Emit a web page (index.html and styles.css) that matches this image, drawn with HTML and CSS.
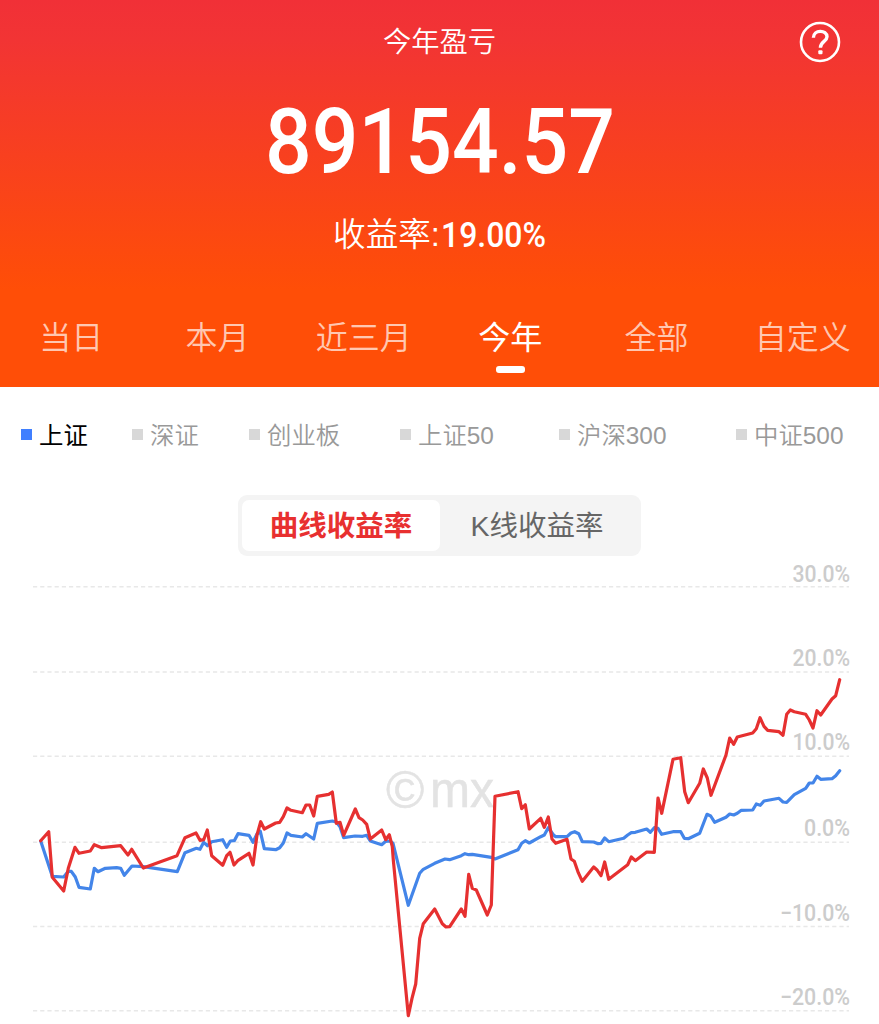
FILE: index.html
```html
<!DOCTYPE html>
<html lang="zh-CN">
<head>
<meta charset="utf-8">
<title>今年盈亏</title>
<link rel="stylesheet" href="styles.css">
</head>
<body>
<header class="summary">
  <div class="title-bar">
    <h1 class="title">今年盈亏</h1>
    <svg class="help" viewBox="0 0 42 42">
      <circle cx="21" cy="21" r="19" fill="none" stroke="#fff" stroke-width="2.6"/>
      <path d="M14.4 16.8C14.4 8.4 28 8.4 28 15.8C28 20.6 21.4 20.4 21.4 26.8" fill="none" stroke="#fff" stroke-width="3.4"/>
      <rect x="19.3" y="29.2" width="4.2" height="4" rx="1" fill="#fff"/>
    </svg>
  </div>
  <svg class="amount" viewBox="0 0 380 110"><text x="15" y="89" textLength="350" lengthAdjust="spacingAndGlyphs">89154.57</text></svg>
  <div class="rate">
    <span class="rate-label">收益率:</span>
    <svg class="rate-value" viewBox="0 0 112 50"><text x="1" y="37.5" textLength="105" lengthAdjust="spacingAndGlyphs">19.00%</text></svg>
  </div>
  <nav class="tabs">
    <span class="tab">当日</span>
    <span class="tab">本月</span>
    <span class="tab">近三月</span>
    <span class="tab tab-active">今年</span>
    <span class="tab">全部</span>
    <span class="tab">自定义</span>
  </nav>
</header>
<main>
  <div class="legend">
    <span class="index index-active"><span class="index-name">上证</span></span>
    <span class="index"><span class="index-name">深证</span></span>
    <span class="index"><span class="index-name">创业板</span></span>
    <span class="index"><span class="index-name">上证50</span></span>
    <span class="index"><span class="index-name">沪深300</span></span>
    <span class="index"><span class="index-name">中证500</span></span>
  </div>
  <div class="switch">
    <span class="option option-active">曲线收益率</span>
    <span class="option">K线收益率</span>
  </div>
  <svg class="chart" viewBox="0 556 879 468">
    <g class="grid">
      <path d="M33 586.7H849M33 672H849M33 756.2H849M33 842.3H849M33 926.5H849M33 1010.7H849"/>
    </g>
    <g class="watermark">
      <text x="386" y="807.5" font-size="52">©</text>
      <text x="430" y="807" textLength="64" lengthAdjust="spacingAndGlyphs" font-size="50">mx</text>
    </g>
    <g class="axis">
      <text x="792.5" y="582" textLength="57.5" lengthAdjust="spacingAndGlyphs">30.0%</text>
      <text x="792.5" y="666" textLength="57.5" lengthAdjust="spacingAndGlyphs">20.0%</text>
      <text x="792.5" y="750" textLength="57.5" lengthAdjust="spacingAndGlyphs">10.0%</text>
      <text x="804" y="836" textLength="46" lengthAdjust="spacingAndGlyphs">0.0%</text>
      <text x="780" y="920.5" textLength="70" lengthAdjust="spacingAndGlyphs">−10.0%</text>
      <text x="780" y="1004.5" textLength="70" lengthAdjust="spacingAndGlyphs">−20.0%</text>
    </g>
    <polyline class="line line-index" points="40.7,841 52.3,876.3 63.7,877 68.3,871.3 71.3,871.3 75.3,877 79,887.3 90.3,889 94.3,868.3 98,871.7 105.3,868.3 116.7,867.7 120.7,868.3 124.3,875.3 132,866 143.3,866.7 177.3,871.7 185,852.7 196.3,848.3 200,849.3 203.7,842.3 207.3,845.7 211.7,841.7 222.7,839.7 226.7,847.3 230.3,841 234.3,840.7 238,833.7 249,835.3 253,842.3 257,834 260.3,831.3 264.3,848.7 275.7,849.7 279.7,847.7 283.3,843 287,833 291,835.3 302.3,837 306,833.7 313.7,839 317.3,823.3 332.3,821 336.3,822 340,826.7 343.7,837.7 355,836 362.7,836.3 366.7,835.3 370.3,841 381.7,844.7 385.7,841.3 390,841 393,843.3 408.3,905.3 419.7,873.3 423.3,869.3 434.7,863.3 445,859 449.7,859.7 461.3,855.7 465,853.7 468.7,854.7 472.3,854.3 491.3,857.3 495,859 518,849.7 521.7,843.3 525.3,840.7 529.3,843 540.7,836.7 544.3,835 548.3,827.7 553.3,834.7 555.7,836.7 567,836.7 571,833 574.7,831.7 578.7,833.7 582.3,841.7 593.7,842 598,843.7 601,843.3 604.7,838 608.7,841.7 623.7,838.3 627.7,835 631.3,832.7 635.3,832.3 646.7,829 650.3,832.3 654.3,827.7 658,828.3 661.7,834.3 673,831.7 680.7,831.7 684.3,838.3 688.3,838.7 699.7,833.3 707,814.3 710.7,816 714.7,822.3 726,817.3 729.7,814 733.7,815 737.3,813.3 741.3,810.3 752.7,810 756.3,804 760.3,805.3 764,801 779,798.3 783,802 786.7,802.3 794.3,794.7 805.7,788.3 809.3,783 813,783 817,776.3 820.7,779.3 832,778.7 835.7,775.7 839.7,770.7"/>
    <polyline class="line line-account" points="40.7,840.7 48.7,831.7 52.3,877.3 63.7,891 68.3,868.3 75,847.3 79,853.3 90.3,851 94.3,844.7 101.7,847.7 120.7,845.7 128,855 131.7,849.3 143.3,868 177,855.7 185,837.7 196,833 200,840.3 203.7,839.7 207.3,830 211.7,855.7 222.7,865.3 226.7,855.7 230,852.3 234,865 237.7,860.7 249,853.3 253,865 257,835 260.7,821.7 264.3,829 275.7,823 279.7,822.3 283.3,816.7 287,808 291,810.3 302.3,812.7 306,805 309.7,805 313.7,816 317.3,796.3 328.7,794.3 332.3,792 336.3,823.3 340,822.3 343.7,835.3 355.3,809 359,817.7 362.7,820 366.7,824.3 370.3,839 381.7,830 385.7,839.7 389.3,834.7 392.3,846.7 393.3,860 408.3,1015.7 412,998.3 415.7,984 419.7,938.3 423.3,923.7 434.7,909 442.3,923.7 446,927 449.7,926.7 461.3,909 465,916.3 468.7,874.3 472.3,888.3 476.3,890 487.3,915 491.3,905 495,796.3 518,791.7 521.7,808.7 525.3,804.7 529.3,829 540.7,818.3 544.3,827.3 548.3,817 552,839 555.7,843.3 567,839.3 571,859 574.3,861.3 578.3,872.7 582.3,881.3 593.7,867 597.3,870.3 601,875.7 604.7,862 608.7,879.3 627.7,864.7 631.3,857 635.3,860.7 646.7,852 654.3,852.3 658,798 661.7,813.3 673,759.3 680.7,757.7 684.7,791.7 688.3,802.7 699.7,783.3 703.3,769 707.3,778 711,795.3 726,755 729.7,738 733.7,744.3 737.3,737 752.7,733 756.3,728.7 760,717.7 764,726.3 767.7,730.3 779,731.7 783,735.3 786.7,714.3 790.3,710 794.3,711.7 805.7,714.3 809.3,720 813,728 817,710.7 820.7,715 832,699 835.7,695.7 839.7,679.7"/>
  </svg>
</main>
</body>
</html>
```
FILE: styles.css
```css
* { box-sizing: border-box; }
body {
  margin: 0;
  background: #fff;
  font-family: "Liberation Sans", "Noto Sans CJK SC", sans-serif;
}
svg { display: block; overflow: visible; }
.summary {
  display: flex;
  flex-direction: column;
  align-items: center;
  height: 387px;
  color: #fff;
  background: linear-gradient(#f13037 0, #f23434 40px, #ff4e07 290px, #ff4e07 100%);
}
.title-bar {
  display: grid;
  grid-template-columns: 1fr auto 1fr;
  align-items: center;
  width: 100%;
  height: 84px;
  padding-right: 38px;
  padding-left: 38px;
}
.title {
  grid-column: 2;
  margin: 0;
  font-size: 28.3px;
  font-weight: 350;
  line-height: 40px;
}
.help { width: 42px; height: 42px; justify-self: end; }
.amount {
  width: 380px;
  height: 110px;
  fill: #fff;
  font: 500 91px Roboto, sans-serif;
}
.rate {
  display: flex;
  align-items: center;
  height: 50px;
  margin-top: 15px;
  padding-left: 6px;
  font-size: 32.6px;
  font-weight: 350;
}
.rate-label { padding-bottom: 6px; }
.rate-value {
  width: 112px;
  height: 50px;
  fill: #fff;
  font: 500 35.5px Roboto, sans-serif;
}
.tabs {
  display: grid;
  grid-template-columns: repeat(6, 1fr);
  width: 878px;
  margin-top: 55px;
  margin-left: -5px;
}
.tab {
  display: flex;
  flex-direction: column;
  align-items: center;
  color: rgba(255, 255, 255, .7);
  font-size: 32px;
  font-weight: 350;
  line-height: 48px;
}
.tab-active { color: #fff; font-weight: 400; }
.tab-active::after {
  content: "";
  width: 29px;
  height: 7px;
  margin-top: 4px;
  border-radius: 3px;
  background: #fff;
}
.legend {
  display: grid;
  grid-template-columns: 111px 117px 151px 159px 177px auto;
  height: 108px;
  padding: 30px 0 0 21px;
}
.index {
  display: flex;
  align-items: center;
  gap: 7px;
  height: 36px;
  color: #999;
  font-size: 24.4px;
  font-weight: 350;
  white-space: nowrap;
}
.index::before {
  content: "";
  width: 11px;
  height: 11px;
  margin-bottom: 1px;
  background: #d8d8d8;
}
.index-name { padding-bottom: 4px; }
.index-active { color: #000; font-weight: 400; }
.index-active::before { background: #407fff; }
.switch {
  display: grid;
  grid-template-columns: 198px 1fr;
  width: 403px;
  height: 61px;
  margin-left: 238px;
  padding: 5px 4px;
  border-radius: 9px;
  background: #f4f4f4;
}
.option {
  display: flex;
  align-items: center;
  justify-content: center;
  padding-right: 3px;
  padding-bottom: 4px;
  color: #666;
  font-size: 28.5px;
}
.option-active {
  padding-right: 0;
  border-radius: 7px;
  background: #fff;
  color: #e83030;
  font-weight: 700;
}
.chart { width: 879px; height: 468px; }
.grid {
  fill: none;
  stroke: #e8e8e8;
  stroke-width: 1.5;
  stroke-dasharray: 4.2 3;
}
.watermark { fill: #e3e3e3; stroke: #e3e3e3; stroke-width: .5; }
.axis {
  fill: #ccc;
  font: 500 23px Roboto, sans-serif;
}
.line {
  fill: none;
  stroke-width: 3.2;
  stroke-linejoin: round;
  stroke-linecap: round;
}
.line-index { stroke: #4385e9; }
.line-account { stroke: #e63030; }
```
